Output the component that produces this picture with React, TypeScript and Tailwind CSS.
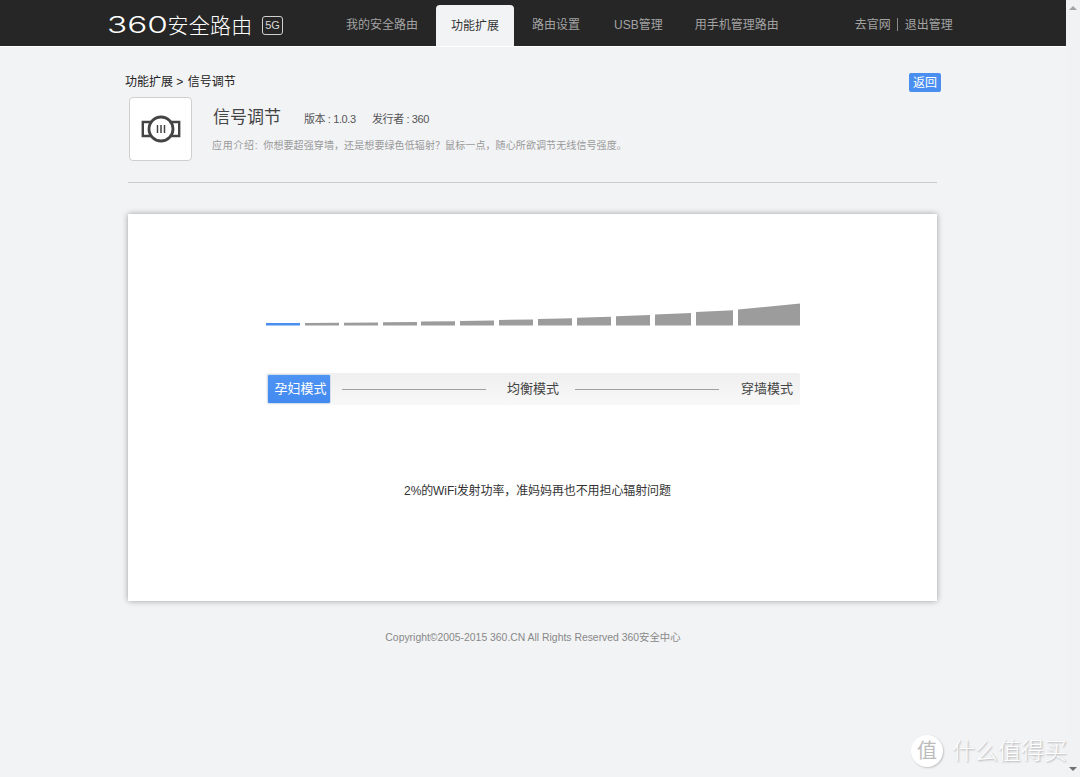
const font = "font-['Liberation_Sans','Noto_Sans_CJK_SC',sans-serif]";

const navItems = [
    { label: "我的安全路由", className: "ml-[63px] pt-[3px]" },
    { label: "功能扩展", className: "ml-[18px] w-[78px] h-[41px] mt-[5px] justify-center rounded-t-[4px] bg-[#f2f3f5] text-[#333]" },
    { label: "路由设置", className: "ml-[18px] pt-[3px]" },
    { label: "USB管理", className: "ml-[34px] pt-[3px]" },
    { label: "用手机管理路由", className: "ml-[32px] pt-[3px]" },
];

// x1, x2, left top, right top
const bars = [
    [266, 300, 323, 323],
    [305, 339, 323, 322.8],
    [344, 378, 322.7, 322.4],
    [383, 417, 322.3, 322],
    [421, 455, 321.6, 321.2],
    [460, 494, 321, 320.5],
    [499, 533, 320, 319.4],
    [538, 572, 319, 318.3],
    [577, 611, 317.8, 316.8],
    [616, 650, 316.2, 315],
    [655, 691, 314.4, 313],
    [696, 733, 312, 310.3],
    [738, 800, 309.4, 303.6],
];

function Logo() {
    return (
        <div className="flex items-center h-[46px] w-[176px] shrink-0 pt-[5px]">
            <span className="w-[61px] font-['Inter'] text-[23px] font-light leading-none text-white origin-left scale-x-[1.45]">
                360
            </span>
            <span className="text-[21px] leading-none text-white w-[87px] tracking-[0.2px] font-light">安全路由</span>
            <span className="ml-[8px] flex h-[19px] w-[21px] shrink-0 items-center justify-center rounded-[3px] border border-[#cfcfcf] text-[11px] text-[#d8d8d8]">
                5G
            </span>
        </div>
    );
}

function Header() {
    return (
        <header className="flex h-[47px] shrink-0 border-b border-white bg-[#262626] pl-[107px] text-[12px] text-[#a3a3a3]">
            <Logo />
            <nav className="flex h-[46px]">
                {navItems.map((item) => (
                    <a key={item.label} className={`flex items-center ${item.className}`}>
                        {item.label}
                    </a>
                ))}
            </nav>
            <div className="ml-[76px] flex items-center pt-[3px]">
                <a>去官网</a>
                <span className="ml-[6px] mr-[7px] h-[13px] w-px bg-[#8a8a8a]" />
                <a>退出管理</a>
            </div>
        </header>
    );
}

function SignalIcon() {
    return (
        <svg width="40" height="32" viewBox="0 0 40 32" fill="none" stroke="#444">
            <path d="M10 9H1.8v14H10M30 9h8.2v14H30" strokeWidth="2.4" />
            <circle cx="20" cy="16" r="12" strokeWidth="2.8" fill="#fff" />
            <path d="M16.5 12v8M20 12v8M23.5 12v8" strokeWidth="1.5" />
        </svg>
    );
}

function SignalBars() {
    return (
        <svg width="534" height="23" viewBox="266 303 534 23" className="block">
            {bars.map(([x1, x2, t1, t2], i) => (
                <polygon
                    key={x1}
                    points={`${x1},${t1} ${x2},${t2} ${x2},325.5 ${x1},325.5`}
                    fill={i === 0 ? "#4a8ff0" : "#9c9c9c"}
                />
            ))}
        </svg>
    );
}

function ModeSwitch() {
    return (
        <div className="mt-[47px] flex h-[32px] w-[534px] items-center rounded-[2px] bg-gradient-to-b from-[#efefef] to-[#f8f8f8] pl-[1px] text-[13px] text-[#444]">
            <button className="h-[30px] w-[64px] rounded-[2px] border border-[#d4dfee] bg-gradient-to-b from-[#4f94f3] to-[#438af0] pl-[3px] text-[13px] text-white">
                孕妇模式
            </button>
            <span className="ml-[11px] h-px w-[144px] bg-[#a0a0a0]" />
            <span className="ml-[21px] w-[52px]">均衡模式</span>
            <span className="ml-[16px] h-px w-[144px] bg-[#a0a0a0]" />
            <span className="ml-[22px] w-[52px]">穿墙模式</span>
        </div>
    );
}

function Scrollbar() {
    return (
        <div className="flex h-full w-[14px] shrink-0 flex-col items-center justify-between bg-[#f1f2f3] py-[6px]">
            <span className="h-0 w-0 border-x-[4px] border-b-[4px] border-x-transparent border-b-[#a3a3a3]" />
            <span className="h-0 w-0 border-x-[4px] border-t-[4px] border-x-transparent border-t-[#707070]" />
        </div>
    );
}

export default function App() {
    return (
        <div className={`relative flex h-[777px] overflow-hidden bg-[#f2f3f5] ${font}`}>
            <div className="flex min-w-0 flex-1 flex-col">
                <Header />
                <main className="pl-[128px] w-[937px] flex flex-col">
                    <div className="mt-[26px] -ml-[3px] flex h-[19px] items-center justify-between -mr-[4px] text-[12px] text-[#222]">
                        <div className="-mt-[2px]">功能扩展 &gt; <span className="ml-[1px]">信号调节</span></div>
                        <button className="h-[19px] w-[32px] rounded-[2px] bg-[#4a8ff0] text-[12px] leading-none text-white">返回</button>
                    </div>
                    <div className="mt-[5px] flex">
                        <div className="ml-px flex h-[64px] w-[63px] shrink-0 items-center justify-center rounded-[4px] border border-[#cfcfcf] bg-white">
                            <SignalIcon />
                        </div>
                        <div className="ml-[21px]">
                            <div className="mt-[10px] flex h-[22px] items-center text-[#444]">
                                <span className="w-[91px] text-[17px]">信号调节</span>
                                <span className="mt-[2px] w-[68px] text-[11px] tracking-[-0.4px] text-[#555]">版本 : 1.0.3</span>
                                <span className="mt-[2px] text-[11px] tracking-[-0.4px] text-[#555]">发行者 : 360</span>
                            </div>
                            <p className="mt-[10px] -ml-px text-[10px] leading-[14px] tracking-[0.1px] text-[#999]">
                                <span className="mr-[5px] tracking-[0.7px]">应用介绍:</span>
                                你想要超强穿墙，还是想要绿色低辐射？鼠标一点，随心所欲调节无线信号强度。
                            </p>
                        </div>
                    </div>
                    <div className="mt-[21px] h-px bg-[#cccccc]" />
                    <section className="mt-[31px] flex h-[387px] flex-col items-center bg-white pl-px pt-[89px] shadow-[0_0_6px_rgba(0,0,0,0.35)]">
                        <SignalBars />
                        <ModeSwitch />
                        <p className="mt-[78px] pl-[9px] text-[12px] leading-[16px] tracking-[-0.1px] text-[#333]">
                            2%的WiFi发射功率，准妈妈再也不用担心辐射问题
                        </p>
                    </section>
                    <footer className="mt-[30px] pl-px text-center text-[10.4px] leading-[14px] text-[#888]">
                        Copyright©2005-2015 360.CN All Rights Reserved 360安全中心
                    </footer>
                </main>
            </div>
            <Scrollbar />
            <div className="absolute left-[911px] top-[735px] flex items-center">
                <span className="flex h-[32px] w-[32px] items-center justify-center rounded-full bg-white text-[20px] text-[#bbb] shadow-[1px_1px_2px_rgba(0,0,0,0.2)]">
                    值
                </span>
                <span className="ml-[9px] whitespace-nowrap text-[23px] font-light leading-none text-white [text-shadow:1px_1px_2px_rgba(0,0,0,0.3)]">
                    什么值得买
                </span>
            </div>
        </div>
    );
}
